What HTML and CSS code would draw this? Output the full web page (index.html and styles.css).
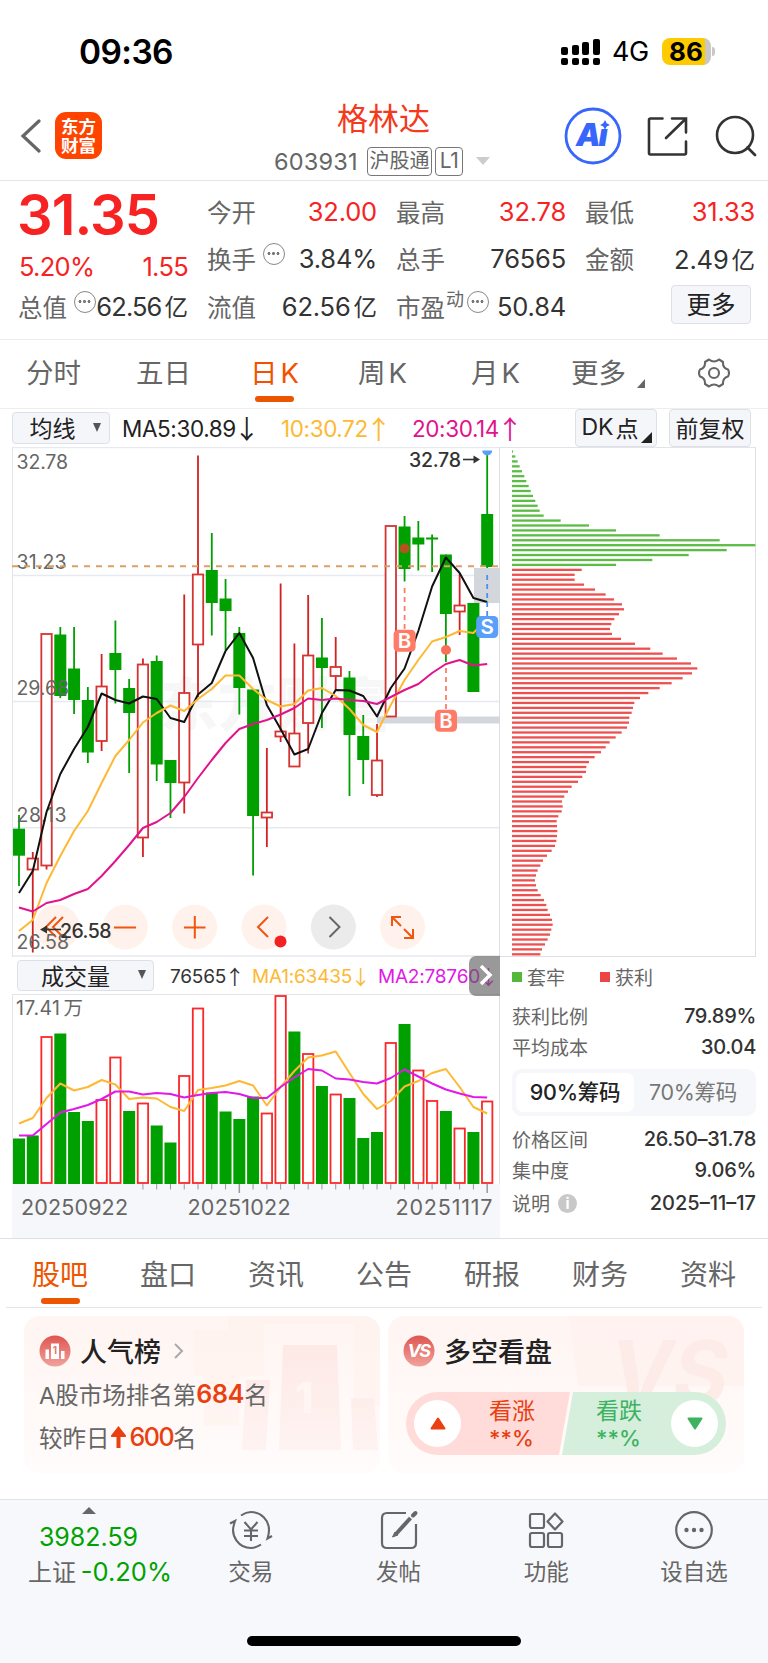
FILE: index.html
```html
<!DOCTYPE html>
<html lang="zh-CN">
<head>
    <meta charset="UTF-8">
    <title>格林达 603931</title>
    <link rel="stylesheet" href="styles.css">
</head>
<body>
    <div class="status-bar">
        <span class="time">09:36</span>
        <div class="status-icons">
            <svg class="signal" width="40" height="28" viewBox="0 0 40 28">
                <g fill="#000">
                    <rect x="0" y="9" width="7" height="8" rx="2"/><rect x="11" y="7" width="7" height="10" rx="2"/>
                    <rect x="21" y="4" width="7" height="13" rx="2"/><rect x="32" y="1" width="7" height="16" rx="2"/>
                    <rect x="0" y="20" width="7" height="7" rx="2"/><rect x="11" y="20" width="7" height="7" rx="2"/>
                    <rect x="21" y="20" width="7" height="7" rx="2"/><rect x="32" y="20" width="7" height="7" rx="2"/>
                </g>
            </svg>
            <span class="network">4G</span>
            <span class="battery">86</span>
            <span class="battery-tip"></span>
        </div>
    </div>

    <header class="header">
        <svg class="back" width="22" height="34" viewBox="0 0 22 34"><path d="M19 2L3 17L19 32" fill="none" stroke="#666" stroke-width="3.2" stroke-linecap="round"/></svg>
        <div class="logo"><span>东方</span><span>财富</span></div>
        <div class="stock">
            <div class="stock-name">格林达</div>
            <div class="stock-code">
                <span class="code">603931</span>
                <span class="tag">沪股通</span>
                <span class="tag tag-l1">L1</span>
                <span class="tri-down"></span>
            </div>
        </div>
        <svg class="ai" width="58" height="58" viewBox="0 0 58 58">
            <circle cx="29" cy="29" r="27" fill="none" stroke="#3866fa" stroke-width="2.8"/>
            <text x="12" y="39" class="ai-text">A</text>
            <text x="34.5" y="39" class="ai-text">ı</text>
            <path d="M41 13l1.700 3.200l3.200 1.700l-3.200 1.700l-1.700 3.200l-1.700-3.200l-3.200-1.700l3.200-1.700z" fill="#3866fa"/>
        </svg>
        <svg class="share" width="42" height="42" viewBox="0 0 42 42"><path d="M15.500 2.500H3.500Q2 2.500 2 4V37Q2 38.500 3.500 38.500H37.500Q39 38.500 39 37V25.500M25 2.500H39V16.500M38 3.500L19 22" fill="none" stroke="#333" stroke-width="2.600" stroke-linecap="round"/></svg>
        <svg class="search" width="44" height="44" viewBox="0 0 44 44"><circle cx="20" cy="20" r="18" fill="none" stroke="#333" stroke-width="2.600"/><path d="M32.500 32.500L40 40" stroke="#333" stroke-width="2.800" stroke-linecap="round"/></svg>
    </header>

    <section class="quote">
        <div class="quote-col col-main">
            <div class="price">31.35</div>
            <div class="row change"><span>5.20%</span><span>1.55</span></div>
            <div class="row"><span class="label">总值</span><i class="dots"></i><span class="num tight">62.56<b>亿</b></span></div>
        </div>
        <div class="quote-col">
            <div class="row"><span class="label">今开</span><span class="num up">32.00</span></div>
            <div class="row"><span class="label">换手</span><i class="dots"></i><span class="num">3.84%</span></div>
            <div class="row"><span class="label">流值</span><span class="num">62.56<b>亿</b></span></div>
        </div>
        <div class="quote-col">
            <div class="row"><span class="label">最高</span><span class="num up">32.78</span></div>
            <div class="row"><span class="label">总手</span><span class="num">76565</span></div>
            <div class="row"><span class="label">市盈</span><sup class="dyn">动</sup><i class="dots dots-pe"></i><span class="num">50.84</span></div>
        </div>
        <div class="quote-col">
            <div class="row"><span class="label">最低</span><span class="num up">31.33</span></div>
            <div class="row"><span class="label">金额</span><span class="num">2.49<b>亿</b></span></div>
            <div class="row"><span class="btn more-btn">更多</span></div>
        </div>
    </section>

    <nav class="periods">
        <span>分时</span>
        <span>五日</span>
        <span class="active">日<em>K</em></span>
        <span>周<em>K</em></span>
        <span>月<em>K</em></span>
        <span class="more">更多<i></i></span>
        <svg width="34" height="34" viewBox="0 0 34 34" fill="none" stroke="#666" stroke-width="2.100" stroke-linejoin="round">
            <path d="M12 3.500Q17 7.500 22 3.500L26 6Q25.500 12 31 13.500Q33 17 31 20.500Q25.500 22 26 28L22 30.500Q17 26.500 12 30.500L8 28Q8.500 22 3 20.500Q1 17 3 13.500Q8.500 12 8 6Z"/>
            <circle cx="17" cy="17" r="5"/>
        </svg>
    </nav>

    <div class="ma-bar">
        <span class="btn select-ma">均线<i class="caret"></i></span>
        <span class="ma ma5">MA5:30.89<u>↓</u></span>
        <span class="ma ma10">10:30.72<u>↑</u></span>
        <span class="ma ma20">20:30.14<u>↑</u></span>
        <span class="btn dk">DK<b>点</b><i></i></span>
        <span class="btn fq">前复权</span>
    </div>

    <main class="charts">
        <div class="charts-left">
            <svg id="kline" width="488" height="510" viewBox="12 447 488 510"></svg>
            <div class="vol-bar">
                <span class="btn select-vol">成交量<i class="caret"></i></span>
                <span class="v v0">76565<u>↑</u></span>
                <span class="v v1">MA1:63435<u>↓</u></span>
                <span class="v v2">MA2:78760<u>↓</u></span>
                <span class="fold"><svg width="14" height="22" viewBox="0 0 14 22"><path d="M2 2L11 11L2 20" fill="none" stroke="#fff" stroke-width="3.500"/></svg></span>
            </div>
            <svg id="volume" width="488" height="244" viewBox="12 994 488 244"></svg>
        </div>
        <div class="charts-right">
            <svg id="chips" width="257" height="510" viewBox="500 447 257 510"></svg>
            <div class="legend">
                <i class="sq sq-green"></i><span>套牢</span>
                <i class="sq sq-red"></i><span>获利</span>
            </div>
            <div class="chip-row"><span>获利比例</span><strong>79.89%</strong></div>
            <div class="chip-row"><span>平均成本</span><strong>30.04</strong></div>
            <div class="switch"><span class="on">90%筹码</span><span>70%筹码</span></div>
            <div class="chip-row"><span>价格区间</span><strong>26.50–31.78</strong></div>
            <div class="chip-row"><span>集中度</span><strong>9.06%</strong></div>
            <div class="chip-row last"><span>说明<i class="info">i</i></span><strong>2025–11–17</strong></div>
        </div>
    </main>

    <nav class="tabs">
        <span class="active">股吧</span>
        <span>盘口</span>
        <span>资讯</span>
        <span>公告</span>
        <span>研报</span>
        <span>财务</span>
        <span>资料</span>
    </nav>

    <section class="cards">
        <div class="card">
            <svg class="card-bg" width="356" height="157" viewBox="0 0 356 157">
                <defs>
                    <linearGradient id="fade" x1="0" y1="0" x2="0" y2="1"><stop offset="0" stop-color="#fde9e6"/><stop offset="1" stop-color="#fef3f1"/></linearGradient>
                </defs>
                <path d="M170 14H204V0H356V90H330V8H240V60H215V110H180V60H170Z" fill="#fff2ee" opacity=".7"/>
                <path d="M259 29H313L317 134H255ZM222 64H246L242 134H218ZM327 82H350L354 134H329Z" fill="url(#fade)"/>
                <text x="271" y="97" class="bg-one">1</text>
            </svg>
            <div class="card-title">
                <svg width="32" height="32" viewBox="0 0 32 32">
                    <defs><linearGradient id="badge" x1="0" y1="0" x2="0" y2="1"><stop offset="0" stop-color="#df5550"/><stop offset="1" stop-color="#f0a39c"/></linearGradient></defs>
                    <circle cx="16" cy="16" r="15.500" fill="url(#badge)"/>
                    <path d="M6.500 14.500H10V24H6.500ZM12 8.500H20V24H12ZM22 16H25.500V24H22Z" fill="#fff"/>
                    <text x="16" y="18.500" text-anchor="middle" class="one">1</text>
                </svg>
                <span>人气榜</span>
                <svg class="go" width="11" height="18" viewBox="0 0 11 18"><path d="M2 2L9 9L2 16" fill="none" stroke="#aaa" stroke-width="2"/></svg>
            </div>
            <p class="rank">A股市场排名第<b>684</b>名</p>
            <p class="rank">较昨日<svg width="17" height="23" viewBox="0 0 17 23"><path d="M8.500 0L16 9.500Q16.500 11 15 11H10.500V22H6.500V11H2Q0.500 11 1 9.500Z" fill="#e84010"/></svg><b class="num600">600</b>名</p>
        </div>
        <div class="card">
            <svg class="card-bg" width="356" height="157" viewBox="0 0 356 157">
                <path d="M181 0H356V70H190Z" fill="#fff1ee" opacity=".7"/>
                <text x="222" y="88" class="bg-vs" textLength="118" lengthAdjust="spacingAndGlyphs">VS</text>
            </svg>
            <div class="card-title">
                <svg width="32" height="32" viewBox="0 0 32 32">
                    <circle cx="16" cy="16" r="15.500" fill="url(#badge)"/>
                    <text x="15.500" y="22" text-anchor="middle" class="vs">VS</text>
                </svg>
                <span>多空看盘</span>
            </div>
            <div class="vote">
                <div class="vote-up"><span class="knob"><svg width="16" height="13" viewBox="0 0 16 13"><path d="M8 1.500L14.500 11.500H1.500Z" fill="#e84010" stroke="#e84010" stroke-width="2" stroke-linejoin="round"/></svg></span><div>看涨<b>**%</b></div></div>
                <div class="vote-down"><div>看跌<b>**%</b></div><span class="knob"><svg width="16" height="13" viewBox="0 0 16 13"><path d="M8 11.500L1.500 1.500H14.500Z" fill="#3db261" stroke="#3db261" stroke-width="2" stroke-linejoin="round"/></svg></span></div>
            </div>
        </div>
    </section>

    <footer class="toolbar">
        <div class="index">
            <i class="tri-up"></i>
            <span class="index-val">3982.59</span>
            <span class="index-name">上证 <b>-0.20%</b></span>
        </div>
        <div class="tool">
            <svg width="44" height="40" viewBox="0 0 44 40" fill="none" stroke="#666" stroke-width="2.100">
                <path d="M12 5.500Q17 2 22 2A18 18 0 0 1 40 20Q40 24 38.500 28.500L43 26M32 34.500Q27 38 22 38A18 18 0 0 1 5 14.500Q5.200 13 6 11L1 13.500"/>
                <path d="M15.500 12L22 19.500L28.500 12M15 20.500H29M15 26H29M22 20V31"/>
            </svg>
            <span>交易</span>
        </div>
        <div class="tool">
            <svg width="40" height="40" viewBox="0 0 40 40" fill="none" stroke="#666" stroke-width="2.200">
                <path d="M27 3H8Q3 3 3 8V33Q3 38 8 38H32Q37 38 37 33V14"/>
                <path d="M17 24L31.500 8" stroke-width="4"/><path d="M34 5.500L36.500 3" stroke-width="4" stroke-linecap="round"/><path d="M16 22L13.500 27L19 25Z" fill="#666" stroke-width="1"/>
            </svg>
            <span>发帖</span>
        </div>
        <div class="tool">
            <svg width="40" height="40" viewBox="0 0 40 40" fill="none" stroke="#666" stroke-width="2.200">
                <rect x="4" y="4" width="14" height="14" rx="2"/><rect x="4" y="23" width="14" height="14" rx="2"/><rect x="22" y="23" width="14" height="14" rx="2"/>
                <path d="M29 3.500L36.500 11.500L29 19.500L21.500 11.500Z" stroke-linejoin="round"/>
            </svg>
            <span>功能</span>
        </div>
        <div class="tool">
            <svg width="40" height="40" viewBox="0 0 40 40">
                <circle cx="20" cy="20" r="17.800" fill="none" stroke="#666" stroke-width="2.200"/>
                <g fill="#666"><circle cx="12.500" cy="20" r="2.200"/><circle cx="20" cy="20" r="2.200"/><circle cx="27.500" cy="20" r="2.200"/></g>
            </svg>
            <span>设自选</span>
        </div>
        <div class="home"></div>
    </footer>

    <script src="script.js"></script>
</body>
</html>
```

FILE: styles.css
```css
* {
    box-sizing: border-box;
}

body {
    margin: 0;
    width: 768px;
    height: 1663px;
    overflow: hidden;
    background: #fff;
    color: #333;
    font-family: Inter, "Noto Sans CJK SC", sans-serif;
    display: flex;
    flex-direction: column;
}

svg {
    display: block;
    flex: none;
}

i, em, u, b {
    font-style: normal;
    text-decoration: none;
    font-weight: inherit;
}

span {
    white-space: nowrap;
}

/* status bar */
.status-bar {
    height: 92px;
    padding: 11px 53px 0 79px;
    display: flex;
    align-items: center;
    justify-content: space-between;
    flex: none;
}

.time {
    font-size: 33.5px;
    font-weight: 600;
    color: #000;
    letter-spacing: -0.6px;
}

.status-icons {
    display: flex;
    align-items: center;
}

.network {
    margin: 0 13px 0 11px;
    font-size: 27px;
    color: #000;
    letter-spacing: -0.5px;
    width: 37px;
}

.battery {
    width: 49px;
    height: 27px;
    border-radius: 8px;
    background: linear-gradient(90deg, #fecb00 43px, #c8c8c8 43px);
    color: #000;
    font-size: 26px;
    font-weight: 700;
    line-height: 27px;
    padding-left: 7px;
}

.battery-tip {
    width: 3px;
    height: 9px;
    margin-left: 1px;
    border-radius: 0 4px 4px 0;
    background: #c8c8c8;
}

/* header */
.header {
    height: 89px;
    border-bottom: 1px solid #e6e6e6;
    display: grid;
    grid-template-columns: 35px 210px 299px 44px 78px 70px 20px;
    padding-left: 20px;
    flex: none;
}

.back {
    margin-top: 27px;
}

.logo {
    width: 47px;
    height: 47px;
    margin-top: 20px;
    border-radius: 11px;
    background: #ff4400;
    color: #fff;
    font-size: 17.5px;
    font-weight: 700;
    line-height: 19px;
    display: flex;
    flex-direction: column;
    align-items: center;
    justify-content: center;
}

.stock-name {
    margin: 6px 0 0 72px;
    font-size: 31px;
    line-height: 42px;
    color: #f5391c;
}

.stock-code {
    display: flex;
    align-items: center;
    height: 30px;
    margin: 6px 0 0 9px;
    color: #666;
}

.code {
    font-size: 23.5px;
    width: 93px;
    letter-spacing: 0.2px;
}

.tag {
    width: 65px;
    height: 29px;
    border: 1.5px solid #777;
    border-radius: 4px;
    font-size: 20px;
    line-height: 26px;
    text-align: center;
    margin-right: 3px;
}

.tag-l1 {
    width: 28px;
    font-size: 21px;
    letter-spacing: -0.5px;
}

.tri-down {
    margin-left: 10px;
    border: 7px solid transparent;
    border-top: 8px solid #ccc;
    border-bottom: 0;
}

.ai {
    margin: 15px 0 0 0;
}

.ai-text {
    font-size: 31px;
    font-weight: 900;
    font-style: italic;
    fill: #3866fa;
}

.share {
    margin: 24px 0 0 39px;
}

.search {
    margin: 23px 0 0 28.5px;
}

/* quote */
.quote {
    height: 159px;
    padding: 7px 13px 0 19px;
    border-bottom: 1px solid #ededed;
    display: grid;
    grid-template-columns: 169px 169px 169px 169px;
    column-gap: 20px;
    flex: none;
}

.row {
    display: flex;
    height: 47.5px;
    align-items: center;
    font-size: 24px;
}

.price {
    height: 63px;
    margin-left: -2px;
    font-size: 56px;
    line-height: 55px;
    font-weight: 600;
    color: #f72323;
    letter-spacing: -0.9px;
}

.change {
    height: 32px;
    justify-content: space-between;
    align-items: flex-start;
    font-size: 25.5px;
    line-height: 31px;
    color: #f72323;
    letter-spacing: -0.7px;
}

.label {
    color: #666;
    font-size: 24.5px;
    margin-left: -1px;
}

.num {
    margin-left: auto;
    color: #333;
    font-size: 25.5px;
    letter-spacing: -0.2px;
}

.num b {
    font-size: 23.5px;
    margin-left: 3px;
    letter-spacing: 0;
}

.num.tight {
    letter-spacing: -0.9px;
}

.num.up {
    color: #f72323;
}

.dots {
    width: 22px;
    height: 22px;
    margin: 0 0 10px 7px;
    border: 1.5px solid #888;
    border-radius: 50%;
    background:
        radial-gradient(circle at 5px 9.5px, #777 1.2px, transparent 1.8px),
        radial-gradient(circle at 9.5px 9.5px, #777 1.2px, transparent 1.8px),
        radial-gradient(circle at 14px 9.5px, #777 1.2px, transparent 1.8px);
    flex: none;
}

.dots-pe {
    margin-left: 3px;
}

.dyn {
    color: #666;
    font-size: 18px;
    line-height: 20px;
    margin: 0 0 14px 1px;
}

.quote-col .label, .quote-col .num {
    padding-bottom: 1px;
}

.btn {
    display: flex;
    align-items: center;
    justify-content: center;
    background: #f5f6fa;
    border: 1.5px solid #dde0e6;
    border-radius: 4px;
    color: #222;
    padding-bottom: 2px;
}

.more-btn {
    width: 80px;
    height: 39px;
    margin: -4px 4px 0 auto;
    font-size: 24.5px;
}

/* period tabs */
.periods {
    height: 69px;
    border-bottom: 1px solid #eee;
    display: grid;
    grid-template-columns: 110px 115px 107px 113px 100px 126px 60px;
    padding: 0 0 3px 26px;
    align-items: center;
    font-size: 27.5px;
    color: #666;
    flex: none;
}

.periods em {
    margin-left: 3px;
    letter-spacing: -1px;
}

.periods span {
    position: relative;
    padding-bottom: 3px;
}

.periods .active {
    color: #f25200;
    margin-left: -1px;
}

.periods .active::after {
    content: "";
    position: absolute;
    left: 5px;
    bottom: -8px;
    width: 39px;
    height: 6px;
    border-radius: 3px;
    background: #ec5500;
}

.more i {
    display: inline-block;
    margin-left: 11px;
    border-left: 8px solid transparent;
    border-bottom: 9px solid #666;
    position: relative;
    top: 5px;
}

/* moving average bar */
.ma-bar {
    height: 38px;
    padding: 0 17px 0 12px;
    display: flex;
    align-items: center;
    font-size: 22.5px;
    flex: none;
}

.select-ma {
    width: 98px;
    height: 32px;
    font-size: 23px;
}

.caret {
    margin: 0 -8px 0 17px;
    border: 4.5px solid transparent;
    border-top: 9px solid #555;
    border-bottom: 0;
}

.ma {
    letter-spacing: -0.4px;
    display: flex;
    align-items: center;
}

.ma u, .v u {
    font-family: "Noto Sans CJK SC", sans-serif;
    letter-spacing: 0;
    display: flex;
    justify-content: center;
}

.ma u {
    width: 20px;
    margin-left: 1px;
    line-height: 32px;
    font-size: 26px;
}

.v u {
    width: 17px;
    line-height: 30px;
    font-size: 20px;
}

.ma5 {
    margin-left: 12px;
    width: 159px;
    color: #222;
}

.ma10 {
    width: 131px;
    color: #fdb933;
}

.ma20 {
    width: 163px;
    color: #e0138c;
}

.dk {
    width: 82px;
    height: 38px;
    font-size: 23px;
    position: relative;
    padding-right: 12px;
}

.dk b {
    margin-left: 2px;
}

.dk i {
    position: absolute;
    right: 4px;
    bottom: 3px;
    border-left: 11px solid transparent;
    border-bottom: 11px solid #222;
}

.fq {
    width: 82px;
    height: 38px;
    margin-left: 12px;
    font-size: 23px;
}

/* charts */
.charts {
    display: flex;
    padding-left: 12px;
    height: 792px;
    border-bottom: 1px solid #dcdfe4;
    flex: none;
}

.charts-left {
    width: 488px;
}

.charts-right {
    width: 257px;
}

svg text {
    font-family: Inter, "Noto Sans CJK SC", sans-serif;
}

.axis {
    font-size: 19.5px;
    fill: #666;
}

.peak {
    font-size: 19.5px;
    font-weight: 500;
    fill: #333;
}

.mark {
    font-size: 20.5px;
    font-weight: 600;
    fill: #fff;
    text-anchor: middle;
}

.date {
    font-size: 21.5px;
    fill: #666;
}

.watermark {
    font-size: 58px;
    font-weight: 900;
    fill: #f7f7f7;
}

.vol-bar {
    height: 37px;
    padding-left: 5px;
    display: flex;
    align-items: center;
    position: relative;
}

.select-vol {
    width: 137px;
    height: 31px;
    font-size: 23px;
    padding-left: 8px;
}

.select-vol .caret {
    margin: 0 -8px 0 28px;
}

.v {
    padding-top: 2px;
    font-size: 19px;
    display: flex;
    align-items: center;
    letter-spacing: -0.2px;
}

.v0 {
    margin-left: 16px;
    width: 82px;
    color: #333;
}

.v1 {
    width: 126px;
    color: #fdb933;
}

.v2 {
    color: #e018e8;
}

.fold {
    position: absolute;
    right: 0;
    top: -1px;
    width: 31px;
    height: 40px;
    border-radius: 7px 0 0 7px;
    background: rgba(90, 90, 90, 0.62);
    display: flex;
    align-items: center;
    justify-content: center;
    padding: 0 0 3px 2px;
}

.legend {
    height: 43px;
    padding: 0 0 4px 12px;
    display: flex;
    align-items: center;
    font-size: 19px;
    color: #666;
}

.sq {
    width: 10px;
    height: 10px;
    margin: 1px 5px 0 0;
    background: #55b83c;
}

.sq-red {
    margin-left: 35px;
    background: #eb4545;
}

.chip-row {
    height: 31.5px;
    padding: 0 1px 1px 12px;
    display: flex;
    align-items: center;
    justify-content: space-between;
    font-size: 19px;
    color: #666;
}

.chip-row strong {
    font-weight: 500;
    font-size: 20px;
    letter-spacing: -0.3px;
    padding-top: 1px;
    color: #333;
}

.chip-row.last {
    height: 34px;
    padding-bottom: 2px;
}

.chip-row.last strong {
    letter-spacing: 0;
}

.info {
    display: inline-block;
    width: 19px;
    height: 19px;
    margin-left: 8px;
    border-radius: 50%;
    background: #c8c8c8;
    color: #fff;
    font-size: 15px;
    font-weight: 700;
    line-height: 19px;
    text-align: center;
    vertical-align: 2px;
}

.switch {
    width: 244px;
    height: 47px;
    margin: 6px 0 7px 12px;
    padding: 4px;
    border-radius: 9px;
    background: #f6f7fa;
    display: flex;
    font-size: 21.5px;
    color: #777;
}

.switch span {
    width: 118px;
    line-height: 39px;
    text-align: center;
    letter-spacing: -0.3px;
}

.switch .on {
    border-radius: 7px;
    background: #fff;
    color: #222;
    font-weight: 500;
}

/* content tabs */
.tabs {
    height: 69px;
    margin: 0 6px;
    border-bottom: 1px solid #e4e5e8;
    display: grid;
    grid-template-columns: repeat(7, 108px);
    text-align: center;
    font-size: 28px;
    line-height: 72px;
    color: #666;
    flex: none;
}

.tabs .active {
    color: #ee5500;
    position: relative;
}

.tabs .active::after {
    content: "";
    position: absolute;
    left: 35px;
    bottom: 7px;
    width: 39px;
    height: 6px;
    border-radius: 3px;
    background: #ee5500;
}

/* cards */
.cards {
    display: flex;
    gap: 8px;
    padding: 8px 24px 26px;
    flex: none;
}

.card {
    position: relative;
    width: 356px;
    height: 157px;
    padding: 14px 15px;
    border-radius: 16px;
    overflow: hidden;
    background: linear-gradient(#fff5f2, #fffcfb);
}

.card-bg {
    position: absolute;
    left: 0;
    top: 0;
}

.bg-one {
    font-size: 42px;
    font-weight: 800;
    fill: #fff6f4;
}

.bg-vs {
    font-size: 88px;
    font-weight: 700;
    font-style: italic;
    fill: #fdebe8;
}

.card-title, .rank, .vote {
    position: relative;
}

.card-title {
    display: flex;
    align-items: center;
    height: 42px;
    font-size: 27px;
    font-weight: 500;
    color: #222;
}

.card-title span {
    margin: -1px 12px 0 9px;
}

.one {
    font-size: 10px;
    font-weight: 700;
    fill: #e27670;
}

.vs {
    font-size: 18px;
    font-weight: 700;
    font-style: italic;
    fill: #fff;
    letter-spacing: -1.5px;
}

.rank {
    margin: 1px 0 0;
    height: 42px;
    display: flex;
    align-items: center;
    font-size: 23.5px;
    color: #666;
    white-space: nowrap;
}

.rank + .rank {
    margin-top: 1px;
}

.rank b {
    font-weight: 600;
    font-size: 25px;
    letter-spacing: -0.2px;
    color: #e84010;
}

.rank svg {
    margin: 0 3px 0 0;
}

.rank .num600 {
    font-weight: 500;
    letter-spacing: -1.5px;
}

.vote {
    display: flex;
    width: 320px;
    height: 63px;
    margin: 20px 0 0 3px;
    border-radius: 32px;
    overflow: hidden;
}

.vote-up, .vote-down {
    width: 164px;
    padding: 0 8px;
    display: flex;
    align-items: center;
    font-size: 23px;
    line-height: 28px;
}

.vote-up {
    background: #ffdcd9;
    color: #e84010;
    clip-path: polygon(0 0, 100% 0, 153px 100%, 0 100%);
}

.vote-down {
    margin-left: -8px;
    background: #d5efdc;
    color: #3db261;
    justify-content: flex-end;
    clip-path: polygon(11px 0, 100% 0, 100% 100%, 0 100%);
}

.vote b {
    display: block;
    font-size: 22px;
    font-weight: 500;
    line-height: 26px;
}

.vote-up div {
    margin-left: 28px;
}

.vote-down div {
    margin-right: 29px;
}

.knob {
    width: 47px;
    height: 47px;
    border-radius: 50%;
    background: #fff;
    display: flex;
    align-items: center;
    justify-content: center;
    flex: none;
}

/* bottom toolbar */
.toolbar {
    position: relative;
    height: 163px;
    border-top: 1.5px solid #e2e3e6;
    background: #f7f8fb;
    display: grid;
    grid-template-columns: 177px repeat(4, 147.7px);
    flex: 1;
}

.index {
    display: flex;
    flex-direction: column;
    align-items: center;
    padding-top: 7px;
    color: #00a200;
}

.tri-up {
    border: 7px solid transparent;
    border-bottom: 7px solid #666;
    border-top: 0;
}

.index-val {
    margin-top: 7px;
    font-size: 25px;
    line-height: 33px;
}

.index-name {
    margin-left: 23px;
    font-size: 24px;
    line-height: 36px;
    color: #666;
}

.index-name b {
    color: #00a200;
    font-size: 25.5px;
    margin-left: -2px;
}

.tool {
    display: flex;
    flex-direction: column;
    align-items: center;
    padding-top: 10px;
    font-size: 22.5px;
    line-height: 34px;
    color: #666;
}

.tool span {
    margin-top: 5px;
}

.home {
    position: absolute;
    left: 247px;
    bottom: 17px;
    width: 274px;
    height: 10px;
    border-radius: 5px;
    background: #000;
}
```

FILE: script.js
```javascript
const STEP = 13.77;
const GREEN = "#00a000";
const RED = "#d63333";
const xAt = (i) => 19 + i * STEP;

// [color, high, body top, body bottom, low]
const candles = [
    ["g", 815, 828.7, 855.7, 886], ["r", 852, 858.5, 869.5, 952.5], ["r", 634, 634, 865.5, 869.5],
    ["g", 627, 634.5, 696, 698], ["g", 627, 668.5, 700, 714], ["g", 687, 700, 752.5, 763],
    ["r", 654, 686.5, 741, 751], ["g", 620.5, 653, 670, 703.5], ["g", 679, 688, 713, 773],
    ["r", 658.5, 664.5, 837.5, 857], ["g", 655.5, 661, 764.5, 781], ["g", 760, 760, 783, 818],
    ["r", 594.5, 693, 782.5, 813.5], ["r", 455.5, 574.5, 644.5, 697], ["g", 533, 570, 603, 635.5],
    ["g", 579, 598.5, 611, 650], ["g", 627, 633, 688, 714.5], ["g", 689.5, 689.5, 816, 875.5],
    ["r", 748, 812.5, 817.5, 847], ["r", 583.5, 731.5, 736.5, 742], ["r", 643.5, 733.5, 766.5, 767],
    ["r", 595, 655.5, 723, 753.5], ["g", 618, 657.5, 668, 728], ["r", 637, 667, 676, 690],
    ["g", 671, 677.5, 735, 796], ["g", 715, 736, 760, 784], ["r", 724, 760.5, 795, 797],
    ["r", 526, 526, 716.5, 716.5], ["g", 516, 526.5, 569, 581.5], ["g", 521, 537.5, 544.5, 570.5],
    ["g", 534.5, 537.5, 539.5, 572], ["g", 554.5, 554.5, 614, 662], ["r", 574, 605.5, 611.5, 635],
    ["g", 603, 603, 692, 692], ["g", 452, 514, 567, 568]
];
const ma5 = [893, 871, 812, 774, 749, 727, 693.5, 700, 703.5, 696.5, 699, 718, 722, 694.5, 683, 651, 633, 658, 705, 729, 754.5, 749, 713, 690, 690.5, 696, 716.5, 688, 668.5, 631, 586.5, 557.5, 573, 598, 602];
const ma10 = [931, 920, 883, 856, 831, 811, 783, 756, 740, 722.5, 713, 705.5, 711, 699, 689, 675.5, 675.5, 689, 700, 706.5, 704, 690.5, 688, 696, 709, 725, 732, 705, 680, 660, 641.5, 637, 631, 633, 619];
const ma20 = [907.5, 911.5, 903, 900, 894, 889, 876, 861, 845, 828, 822, 813, 797, 778, 760, 743, 729, 724, 720, 714.5, 708, 698.5, 700, 698.5, 700, 701, 704, 697, 690, 684, 673, 664, 660, 665.5, 664];

const volumes = [1138.5, 1135.5, 1036, 1033.5, 1112, 1121, 1099, 1056.5, 1111, 1102.5, 1125.5, 1142.5, 1075, 1007.5, 1092.5, 1111.5, 1119, 1096.5, 1112.5, 995, 1031.5, 1053, 1086, 1093.5, 1098, 1138, 1132, 1042, 1024, 1069.5, 1100, 1111, 1127.5, 1132, 1100.5];
const volColors = "ggrgggrrgrggrrggggrrgrgrgggrgrrgrgr";
const volMa1 = [1123.5, 1118, 1098, 1083.5, 1090.5, 1087, 1080, 1084.5, 1099, 1097.5, 1098.5, 1107, 1111, 1090, 1088, 1085.5, 1081, 1085.5, 1105.5, 1087, 1071, 1057.5, 1055.5, 1051.5, 1073, 1094, 1109, 1101, 1086.5, 1081, 1073, 1069, 1087, 1107, 1113.5];
const volMa2 = [1135.5, 1135.5, 1124, 1112.5, 1109, 1105, 1099, 1091.5, 1091.5, 1094.5, 1093, 1094, 1097.5, 1095, 1093, 1092, 1094, 1098, 1098, 1087, 1077.5, 1069, 1070.5, 1078.5, 1079.5, 1082, 1083.5, 1078, 1069.5, 1076.5, 1083.5, 1089.5, 1093.5, 1097, 1097.5];

// chip distribution, bar ends in thirds of a pixel; the first 24 are trapped holders
const chips = [54, 61, 68, 74, 81, 88, 94, 101, 107, 114, 121, 128, 134, 146, 197, 282, 363, 494, 674, 781, 695, 581, 472, 363,
    260, 239, 239, 267, 300, 332, 357, 381, 387, 372, 358, 349, 345, 351, 378, 420, 466, 503, 546, 588, 607, 591, 563, 530, 494, 460,
    435, 418, 414, 410, 403, 402, 396, 380, 362, 344, 332, 318, 299, 282, 274, 273, 262, 249, 230, 219, 208, 201, 203, 200, 190, 185,
    186, 187, 186, 184, 180, 170, 156, 144, 136, 128, 123, 120, 123, 128, 137, 147, 154, 158, 165, 171, 173, 169, 165, 158, 150, 141, 136];

function line(x1, y1, x2, y2, color, width, extra = "") {
    return `<line x1="${x1}" y1="${y1}" x2="${x2}" y2="${y2}" stroke="${color}" stroke-width="${width}" ${extra}/>`;
}

function polyline(values, color) {
    const points = values.map((y, i) => `${xAt(i)},${y}`).join(" ");
    return `<polyline points="${points}" fill="none" stroke="${color}" stroke-width="2" stroke-linejoin="round"/>`;
}

function text(x, y, value, cls, width) {
    return `<text x="${x}" y="${y}" class="${cls}" ${width ? `textLength="${width}"` : ""}>${value}</text>`;
}

function badge(x, y, letter, color) {
    return `<rect x="${x - 11}" y="${y - 11}" width="22" height="22" rx="4.5" fill="${color}"/>` + text(x, y + 7.3, letter, "mark");
}

function drawKline() {
    let out = text(160, 726, "东方财富", "watermark");
    [447.5, 575.5, 701.5, 827.7, 956].forEach((y) => { out += line(12, y, 500, y, "#e6e9f0", 1.4); });
    out += line(12.5, 447, 12.5, 957, "#e2e4ea", 1) + line(499.5, 447, 499.5, 957, "#dcdfe6", 1);
    out += `<rect x="474" y="568" width="26" height="35" fill="#d3d7dc"/><rect x="377" y="716.5" width="123" height="7" fill="#d3d7dc"/>`;
    candles.forEach(([c, high, top, bottom, low], i) => {
        const x = xAt(i);
        if (c === "g") {
            out += line(x, high, x, low, GREEN, 1.8);
            out += `<rect x="${x - 6}" y="${top}" width="12" height="${bottom - top}" fill="${GREEN}"/>`;
        } else {
            out += line(x, high, x, top, "#d42020", 1.8) + line(x, bottom, x, low, "#d42020", 1.8);
            out += `<rect x="${x - 5.2}" y="${top}" width="10.4" height="${bottom - top}" fill="#fff" stroke="${RED}" stroke-width="1.8"/>`;
        }
    });

    // price labels
    out += text(16.5, 469, "32.78", "axis", 51.5) + text(16.5, 568.5, "31.23", "axis", 50) + text(16.5, 695, "29.68", "axis", 52.5);
    out += text(16.5, 821.5, "28.13", "axis", 50);
    out += polyline(ma5, "#111") + polyline(ma10, "#fdb933") + polyline(ma20, "#e0138c");
    out += line(12, 566.3, 500, 566.3, "#d9a066", 2, `stroke-dasharray="6 6"`);
    out += text(409, 467, "32.78", "peak", 52);
    out += line(463, 459.5, 474, 459.5, "#333", 1.6) + `<path d="M473.500 455.500L480 459.500L473.500 463.500Z" fill="#333"/>`;

    // buy and sell marks
    out += line(404.6, 588, 404.6, 630, "#ff7b66", 1.8, `stroke-dasharray="5 4"`);
    out += line(446, 668, 446, 710, "#ff7b66", 1.8, `stroke-dasharray="5 4"`);
    out += line(487.2, 575, 487.2, 616, "#4a90f0", 1.8, `stroke-dasharray="5 4"`);
    out += `<circle cx="404.600" cy="548.500" r="5" fill="#b5531d"/><circle cx="446" cy="650" r="5" fill="#f9705a"/>`;
    out += `<path d="M482.200 450.500H492.200A5 5 0 0 1 482.200 450.500Z" fill="#5a9ff5"/>`;
    out += badge(404.6, 640.7, "B", "#ff7b68") + badge(446, 720.7, "B", "#ff7b68") + badge(487.2, 627, "S", "#5a9ffa");

    // chart controls
    [57, 125.3, 194.6, 264, 333.4, 402.5].forEach((x, i) => {
        out += `<circle cx="${x}" cy="927" r="22.500" fill="${i === 4 ? "#d8d8d8" : "#ffe9df"}" fill-opacity="${i === 4 ? 0.5 : 0.62}"/>`;
    });
    out += `<g fill="none" stroke="#f0560f" stroke-width="2">
        <path d="M56 917L46 927L56 937M63 917L53 927L63 937"/>
        <path d="M114 927.500H136M184 927.500H205.500M194.800 916V938.500M268 917L258 927L268 937"/>
        <path d="M392 926V917H401M392 917L401 926M413 929V938H404M413 938L404 929"/></g>
        <path d="M329.500 917L339.500 927L329.500 937" fill="none" stroke="#666" stroke-width="2"/>
        <circle cx="280.500" cy="941.500" r="6" fill="#f32222"/>`;
    out += `<path d="M40 929.500L47 925.500V933.500Z" fill="#333"/>` + line(46, 929.5, 61, 929.5, "#333", 1.6);
    out += text(16.5, 948.5, "26.58", "axis", 52.5) + text(60, 937.5, "26.58", "peak", 51.5);
    document.getElementById("kline").innerHTML = out;
}

function drawVolume() {
    let out = `<rect x="12" y="1184" width="488" height="54" fill="#f6f7fa"/>`;
    out += line(12, 994.5, 500, 994.5, "#e2e4ea", 1.2) + line(12.5, 994, 12.5, 1184, "#e2e4ea", 1) + line(499.5, 994, 499.5, 1184, "#dcdfe6", 1);
    volumes.forEach((top, i) => {
        const x = xAt(i);
        if (volColors[i] === "g") {
            out += `<rect x="${x - 6}" y="${top}" width="12" height="${1184 - top}" fill="${GREEN}"/>`;
        } else {
            out += `<rect x="${x - 5.2}" y="${top + 1}" width="10.4" height="${1182 - top}" fill="#fff" stroke="#fa2828" stroke-width="1.8"/>`;
        }
        if (i >= 9) {
            out += line(x, 1184, x, i === 16 || i === 34 ? 1193 : 1189.5, "#999", i === 16 || i === 34 ? 1.5 : 1);
        }
    });
    out += polyline(volMa1, "#fdb933") + polyline(volMa2, "#e018e8");
    out += text(16, 1014.5, "17.41<tspan dx='3'>万</tspan>", "axis", 67);
    out += text(21, 1215, "20250922", "date", 107) + text(187.5, 1215, "20251022", "date", 103) + text(395.5, 1215, "20251117", "date", 97);
    document.getElementById("volume").innerHTML = out;
}

function drawChips() {
    let out = line(500, 447.5, 756, 447.5, "#e2e4ea", 1.2) + line(755.5, 447, 755.5, 957, "#dcdfe6", 1) + line(500, 956.5, 756, 956.5, "#dcdfe6", 1.2);
    chips.forEach((end, i) => {
        const y = 450.4 + i * 4.929;
        out += `<rect x="512" y="${y}" width="${(end - 51) / 3}" height="2.300" fill="${i < 24 ? "#5cbc45" : "#ee5050"}"/>`;
    });
    document.getElementById("chips").innerHTML = out;
}

drawKline();
drawVolume();
drawChips();
```
